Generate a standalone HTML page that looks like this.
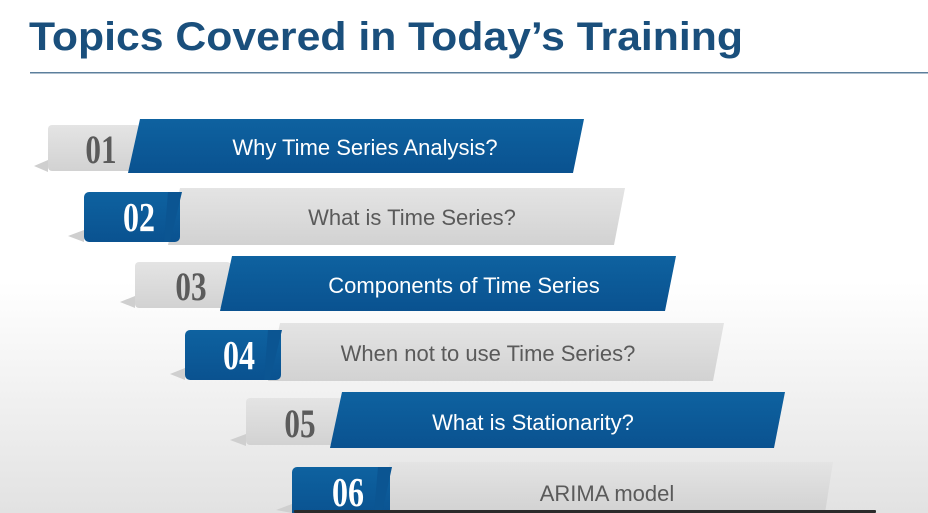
<!DOCTYPE html>
<html><head><meta charset="utf-8"><style>
html,body{margin:0;padding:0;width:928px;height:513px;overflow:hidden;background:linear-gradient(#fff 0%,#fff 55%,#ececec 85%,#e2e2e2 100%);}
svg{position:absolute;left:0;top:0}
</style></head><body>
<svg width="928" height="513" viewBox="0 0 928 513" font-family="Liberation Sans, sans-serif">
<defs>
<linearGradient id="g" x1="0" y1="0" x2="0" y2="1"><stop offset="0" stop-color="#e4e4e4"/><stop offset="1" stop-color="#d2d2d2"/></linearGradient>
<linearGradient id="b" x1="0" y1="0" x2="0" y2="1"><stop offset="0" stop-color="#0e62a0"/><stop offset="1" stop-color="#0a5290"/></linearGradient>
</defs>
<text x="29" y="50" font-size="40" font-weight="bold" fill="#1a4f7c" textLength="714" lengthAdjust="spacingAndGlyphs">Topics Covered in Today’s Training</text>
<rect x="30" y="72" width="898" height="1.5" fill="#5c7f9c"/>

<polygon points="34,166 48,160 48,172" fill="#cfcfcf"/>
<rect x="48" y="125" width="92" height="46" rx="4" fill="url(#g)"/>
<polygon points="140,119 584,119 573,173 128,173" fill="url(#b)"/>
<text x="101" y="163" font-family="Liberation Serif, serif" font-weight="bold" font-size="40" fill="#5b5b5b" text-anchor="middle" transform="translate(101 0) scale(0.78 1) translate(-101 0)">01</text>
<text x="365" y="155" font-size="22" fill="#fff" text-anchor="middle">Why Time Series Analysis?</text>

<polygon points="68,236 84,230 84,242" fill="#cfcfcf"/>
<polygon points="180,188 625,188 614,245 168,245" fill="url(#g)"/>
<rect x="84" y="192" width="96" height="50" rx="5" fill="url(#b)"/>
<polygon points="168,192 182,192 170,242 164,242" fill="#0b5592"/>
<text x="139" y="231" font-family="Liberation Serif, serif" font-weight="bold" font-size="41" fill="#fff" text-anchor="middle" transform="translate(139 0) scale(0.78 1) translate(-139 0)">02</text>
<text x="412" y="225" font-size="22" fill="#5a5a5a" text-anchor="middle">What is Time Series?</text>

<polygon points="120,302 135,296 135,308" fill="#cfcfcf"/>
<rect x="135" y="262" width="96" height="46" rx="4" fill="url(#g)"/>
<polygon points="232,256 676,256 665,311 220,311" fill="url(#b)"/>
<text x="191" y="300" font-family="Liberation Serif, serif" font-weight="bold" font-size="40" fill="#5b5b5b" text-anchor="middle" transform="translate(191 0) scale(0.78 1) translate(-191 0)">03</text>
<text x="464" y="293" font-size="22" fill="#fff" text-anchor="middle">Components of Time Series</text>

<polygon points="170,374 185,368 185,380" fill="#cfcfcf"/>
<polygon points="280,323 724,323 713,381 268,381" fill="url(#g)"/>
<rect x="185" y="330" width="96" height="50" rx="5" fill="url(#b)"/>
<polygon points="268,330 282,330 270,380 264,380" fill="#0b5592"/>
<text x="239" y="369" font-family="Liberation Serif, serif" font-weight="bold" font-size="41" fill="#fff" text-anchor="middle" transform="translate(239 0) scale(0.78 1) translate(-239 0)">04</text>
<text x="488" y="361" font-size="22" fill="#5a5a5a" text-anchor="middle">When not to use Time Series?</text>

<polygon points="230,440 246,434 246,446" fill="#cfcfcf"/>
<rect x="246" y="398" width="96" height="47" rx="4" fill="url(#g)"/>
<polygon points="342,392 785,392 774,448 330,448" fill="url(#b)"/>
<text x="300" y="437" font-family="Liberation Serif, serif" font-weight="bold" font-size="40" fill="#5b5b5b" text-anchor="middle" transform="translate(300 0) scale(0.78 1) translate(-300 0)">05</text>
<text x="533" y="430" font-size="22" fill="#fff" text-anchor="middle">What is Stationarity?</text>

<polygon points="276,510 292,504 292,513" fill="#cfcfcf"/>
<polygon points="390,462 833,462 825,513 378,513" fill="url(#g)"/>
<rect x="292" y="467" width="98" height="50" rx="5" fill="url(#b)"/>
<polygon points="378,467 392,467 382,513 374,513" fill="#0b5592"/>
<text x="348" y="506" font-family="Liberation Serif, serif" font-weight="bold" font-size="41" fill="#fff" text-anchor="middle" transform="translate(348 0) scale(0.78 1) translate(-348 0)">06</text>
<text x="607" y="501" font-size="22" fill="#5a5a5a" text-anchor="middle">ARIMA model</text>

<rect x="294" y="510" width="582" height="3" rx="1" fill="#2b2b2b"/>
</svg>
</body></html>
